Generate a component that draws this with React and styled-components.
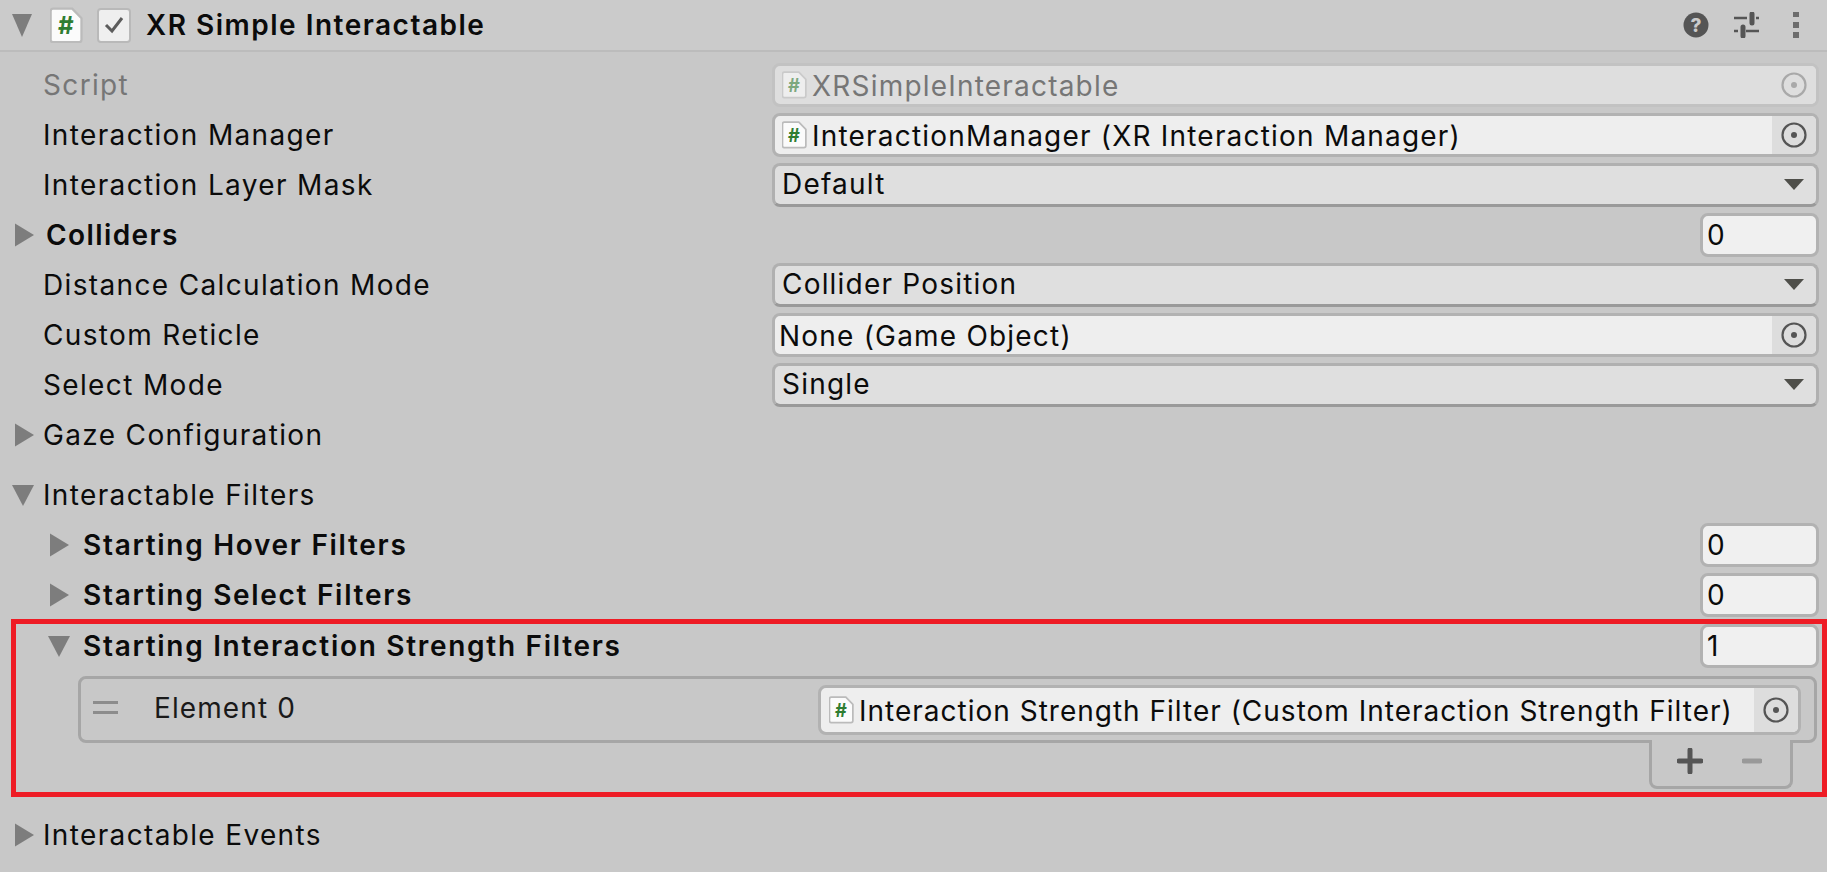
import React from 'react';
import styled, { createGlobalStyle } from 'styled-components';

const GlobalStyle = createGlobalStyle`
  html, body { margin: 0; padding: 0; background: #c8c8c8; overflow: hidden; }
  body { font-family: Inter, "Noto Sans", sans-serif; color: #0b0b0b; }
`;

const Inspector = styled.div`
  width: 1827px;
  height: 872px;
  font-size: 28px;
  letter-spacing: 1.2px;
  background: #c8c8c8;
`;

const Header = styled.div`
  display: flex;
  align-items: center;
  height: 50px;
  padding: 0 28px 0 12px;
  background: #cbcbcb;
  border-bottom: 2px solid #bcbcbc;
  margin-bottom: 8px;
`;

const Title = styled.div`
  flex: 1;
  margin-left: 15px;
  font-weight: 600;
  letter-spacing: 1.5px;
`;

const HeaderIcons = styled.div`
  display: flex;
  align-items: center;
  gap: 24px;
`;

const EnableBox = styled.div`
  width: 34px;
  height: 35px;
  box-sizing: border-box;
  margin-left: 14px;
  display: flex;
  align-items: center;
  justify-content: center;
  background: #efefef;
  border: 2px solid #b9b9b9;
  border-radius: 4px;
`;

const Row = styled.div`
  display: grid;
  grid-template-columns: ${(p) => p.$labelWidth || 772}px 1fr;
  align-items: center;
  height: 50px;
  padding-right: 8px;
  margin-top: ${(p) => p.$gap || 0}px;
`;

const Label = styled.div`
  display: flex;
  align-items: center;
  padding-left: ${(p) => p.$indent || 43}px;
  font-weight: ${(p) => (p.$bold ? 600 : 400)};
  letter-spacing: ${(p) => p.$spacing || (p.$bold ? 1.7 : 1.35)}px;
  color: ${(p) => (p.$muted ? '#767676' : 'inherit')};
  white-space: nowrap;
`;

const Arrow = styled.svg`
  position: absolute;
  flex: none;
  margin-left: ${(p) => p.$x}px;
`;

const Field = styled.div`
  display: flex;
  align-items: center;
  height: 44px;
  box-sizing: border-box;
  border-radius: 8px;
  overflow: hidden;
  background: ${(p) => (p.$disabled ? '#dedede' : '#eeeeee')};
  border: 3px solid ${(p) => (p.$disabled ? '#c2c2c2' : '#b2b2b2')};
  color: ${(p) => (p.$disabled ? '#767676' : 'inherit')};
`;

const IconSlot = styled.span`
  display: flex;
  margin-left: ${(p) => p.$left}px;
`;

const FieldText = styled.div`
  flex: 1;
  padding: 2px 0 0 ${(p) => p.$pad || 0}px;
  letter-spacing: ${(p) => p.$spacing || 1.2}px;
  white-space: nowrap;
`;

const PickButton = styled.div`
  width: 44px;
  align-self: stretch;
  display: flex;
  align-items: center;
  justify-content: center;
  background: ${(p) => (p.$disabled ? '#dedede' : '#dddddd')};
`;

const Dropdown = styled.div`
  display: flex;
  align-items: center;
  justify-content: space-between;
  height: 44px;
  box-sizing: border-box;
  padding: 0 12px 2px 7px;
  background: #dfdfdf;
  border: 3px solid #b0b0b0;
  border-bottom-color: #9a9a9a;
  border-radius: 8px;
`;

const CountCell = styled.div`
  display: flex;
  justify-content: flex-end;
`;

const CountInput = styled.div`
  width: 119px;
  height: 44px;
  box-sizing: border-box;
  display: flex;
  align-items: center;
  padding-left: 4px;
  background: #f0f0f0;
  border: 3px solid #b2b2b2;
  border-radius: 8px;
`;

const Highlight = styled.div`
  height: 178px;
  box-sizing: border-box;
  margin: -1px 0 13px 11px;
  border: 5px solid #ee1c25;
`;

const HighlightRow = styled(Row)`
  height: 42px;
  padding-right: 3px;
`;

const List = styled.div`
  display: flex;
  align-items: center;
  height: 67px;
  box-sizing: border-box;
  margin: 10px 5px 0 62px;
  padding-right: 13px;
  border: 3px solid #a6a6a6;
  border-radius: 8px;
`;

const Handle = styled.div`
  flex: none;
  width: 25px;
  height: 7px;
  margin: 0 0 5px 12px;
  border-top: 3px solid #8c8c8c;
  border-bottom: 3px solid #8c8c8c;
`;

const ElementLabel = styled.div`
  flex: none;
  width: 700px;
  padding: 0 0 3px 36px;
  box-sizing: border-box;
  letter-spacing: 1.1px;
  color: #1a1a1a;
`;

const ListField = styled(Field)`
  flex: 1;
  height: 50px;
`;

const ListFooter = styled.div`
  display: flex;
  align-items: center;
  width: 144px;
  height: 49px;
  box-sizing: border-box;
  margin: -3px 0 0 1633px;
  padding: 0 0 4px 25px;
  gap: 39px;
  background: #c8c8c8;
  border: 3px solid #a6a6a6;
  border-top: none;
  border-radius: 0 0 8px 8px;
`;

function Caret({ open, x }) {
  return (
    <Arrow $x={x} width="22" height="24" viewBox="0 0 22 24">
      <path d={open ? 'M0 2h22L11 23z' : 'M0 0.5l19 11.5L0 23.5z'} fill="#7d7d7d" />
    </Arrow>
  );
}

function ScriptIcon({ size = 25, faded }) {
  return (
    <svg width={size} height={size * 1.12} viewBox="0 0 26 29" style={{ flex: 'none', opacity: faded ? 0.55 : 1 }}>
      <path d="M2.5 1.2h15l7.3 7.5v17a2 2 0 0 1-2 2H2.5a2 2 0 0 1-2-1.5V3a2 2 0 0 1 2-1.8z" fill="#fbfbfb" stroke="#bbb" strokeWidth="1.8" />
      <text x="12.5" y="21.5" textAnchor="middle" fontSize="19" fontWeight="700" letterSpacing="0" fontFamily="Inter, sans-serif" fill="#2f7d32">#</text>
    </svg>
  );
}

function PickIcon({ faded }) {
  const c = faded ? '#a9a9a9' : '#555';
  return (
    <svg width="26" height="26" viewBox="0 0 26 26">
      <circle cx="13" cy="13" r="11.5" fill="none" stroke={c} strokeWidth="2.2" />
      <circle cx="13" cy="13" r="3" fill={c} />
    </svg>
  );
}

function ObjectField({ text, script, disabled }) {
  return (
    <Field $disabled={disabled}>
      {script && <IconSlot $left={7}><ScriptIcon faded={disabled} /></IconSlot>}
      <FieldText $pad={script ? 5 : 4}>{text}</FieldText>
      <PickButton $disabled={disabled}><PickIcon faded={disabled} /></PickButton>
    </Field>
  );
}

function Select({ text }) {
  return (
    <Dropdown>
      {text}
      <svg width="20" height="12" viewBox="0 0 20 12"><path d="M0 1h20L10 12z" fill="#4f4f4a" /></svg>
    </Dropdown>
  );
}

function Count({ value }) {
  return (
    <CountCell><CountInput>{value}</CountInput></CountCell>
  );
}

export default function App() {
  return (
    <Inspector>
      <GlobalStyle />
      <Header>
        <svg width="20" height="23" viewBox="0 0 20 23" style={{ flex: 'none', marginRight: 18 }}><path d="M0 0h20L10 23z" fill="#7d7d7d" /></svg>
        <ScriptIcon size={33} />
        <EnableBox>
          <svg width="22" height="20" viewBox="0 0 22 20"><path d="M3 10l6 6 10-13" fill="none" stroke="#5c5c5c" strokeWidth="3" /></svg>
        </EnableBox>
        <Title>XR Simple Interactable</Title>
        <HeaderIcons>
          <svg width="26" height="26" viewBox="0 0 26 26">
            <circle cx="13" cy="13" r="12.5" fill="#555" />
            <text x="13" y="20" textAnchor="middle" fontSize="19" fontWeight="800" letterSpacing="0" fontFamily="Inter, sans-serif" fill="#cbcbcb">?</text>
          </svg>
          <svg width="26" height="26" viewBox="0 0 26 26">
            <path d="M1 6h13M23 6h3M1 19h4M13 19h13" stroke="#555" strokeWidth="2.5" />
            <path d="M19 2v9M10 15v9" stroke="#555" strokeWidth="5" strokeLinecap="round" />
          </svg>
          <svg width="6" height="26" viewBox="0 0 6 26" style={{ marginLeft: 10 }}>
            <path d="M0 0h6v5H0zM0 10h6v6H0zM0 20h6v6H0z" fill="#6d6d6d" />
          </svg>
        </HeaderIcons>
      </Header>

      <Row><Label $muted>Script</Label><ObjectField text="XRSimpleInteractable" script disabled /></Row>
      <Row><Label>Interaction Manager</Label><ObjectField text="InteractionManager (XR Interaction Manager)" script /></Row>
      <Row><Label>Interaction Layer Mask</Label><Select text="Default" /></Row>
      <Row><Label $bold $indent={46} $spacing={1.4}><Caret x={-31} />Colliders</Label><Count value="0" /></Row>
      <Row><Label>Distance Calculation Mode</Label><Select text="Collider Position" /></Row>
      <Row><Label>Custom Reticle</Label><ObjectField text="None (Game Object)" /></Row>
      <Row><Label>Select Mode</Label><Select text="Single" /></Row>
      <Row><Label><Caret x={-28} />Gaze Configuration</Label></Row>
      <Row $gap={10}><Label><Caret open x={-31} />Interactable Filters</Label></Row>
      <Row><Label $bold $indent={83}><Caret x={-33} />Starting Hover Filters</Label><Count value="0" /></Row>
      <Row><Label $bold $indent={83}><Caret x={-33} />Starting Select Filters</Label><Count value="0" /></Row>

      <Highlight>
        <HighlightRow $labelWidth={757}>
          <Label $bold $indent={67}><Caret open x={-35} />Starting Interaction Strength Filters</Label>
          <Count value="1" />
        </HighlightRow>
        <List>
          <Handle />
          <ElementLabel>Element 0</ElementLabel>
          <ListField><IconSlot $left={8}><ScriptIcon /></IconSlot><FieldText $pad={5} $spacing={1}>Interaction Strength Filter (Custom Interaction Strength Filter)</FieldText><PickButton><PickIcon /></PickButton></ListField>
        </List>
        <ListFooter>
          <svg width="26" height="26" viewBox="0 0 26 26"><path d="M13 2v22M2 13h22" stroke="#555" strokeWidth="5" strokeLinecap="round" /></svg>
          <svg width="20" height="6" viewBox="0 0 20 6"><path d="M2 3h16" stroke="#999" strokeWidth="5" strokeLinecap="round" /></svg>
        </ListFooter>
      </Highlight>

      <Row><Label><Caret x={-28} />Interactable Events</Label></Row>
    </Inspector>
  );
}
